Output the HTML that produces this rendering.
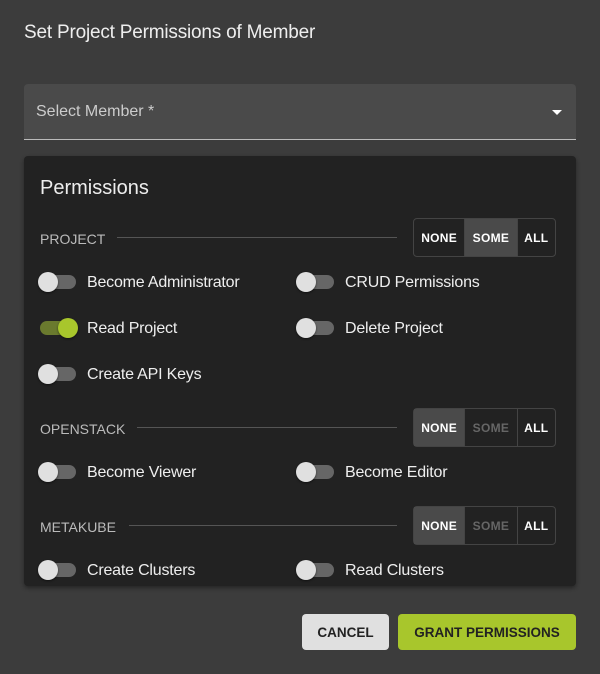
<!DOCTYPE html><html><head><style>
body{margin:0;width:600px;height:674px;background:#3c3c3c;font-family:"Liberation Sans",sans-serif;color:#fff;position:relative;overflow:hidden}
.a{position:absolute}
.title{left:24px;top:22px;font-size:19px;color:#eee;letter-spacing:-.2px}
.sel{left:24px;top:84px;width:552px;height:55px;background:#4a4a4a;border-bottom:1px solid #bbb;border-radius:4px 4px 0 0}
.sel span{position:absolute;left:12px;top:19px;font-size:16px;color:#ccc}
.sel i{position:absolute;right:14px;top:26px;border:5px solid transparent;border-top-color:#fff;border-bottom:0}
.card{left:24px;top:156px;width:552px;height:430px;background:#222;border-radius:4px;box-shadow:0 2px 4px rgba(0,0,0,.4)}
.h{font-size:14px;color:#bbb}
.line{height:1px;background:#555}
.grp{display:flex;border:1px solid #444;border-radius:4px;height:37px;font-size:12px;font-weight:bold;letter-spacing:.3px}
.grp div{display:flex;align-items:center;justify-content:center;border-right:1px solid #444}
.grp div:last-child{border-right:0}
.on{background:#4a4a4a}
.dim{color:#666}
.t{width:36px;height:14px;border-radius:7px;background:#666}
.t b{position:absolute;left:-2px;top:-3px;width:20px;height:20px;border-radius:50%;background:#e0e0e0;box-shadow:0 1px 2px rgba(0,0,0,.5)}
.t.g{background:#6a7a2e}.t.g b{left:18px;background:#a8c62c}
.l{font-size:16px;color:#eee;letter-spacing:-.2px}
.btn{top:614px;height:36px;border-radius:4px;font-size:13.5px;font-weight:bold;color:#222;display:flex;align-items:center;justify-content:center}
</style></head><body>
<div class="a title">Set Project Permissions of Member</div>
<div class="a sel"><span>Select Member *</span><i></i></div>
<div class="a card"></div>
<div class="a" style="left:40px;top:177px;font-size:20px;color:#eee">Permissions</div>

<div class="a h" style="left:40px;top:231px">PROJECT</div>
<div class="a line" style="left:117px;top:237px;width:280px"></div>
<div class="a grp" style="left:413px;top:218px;width:141px"><div style="width:51px">NONE</div><div class="on" style="width:52px">SOME</div><div style="width:38px">ALL</div></div>

<div class="a t" style="left:40px;top:275px"><b></b></div><div class="a l" style="left:87px;top:274px">Become Administrator</div>
<div class="a t" style="left:298px;top:275px"><b></b></div><div class="a l" style="left:345px;top:274px">CRUD Permissions</div>
<div class="a t g" style="left:40px;top:321px"><b></b></div><div class="a l" style="left:87px;top:320px">Read Project</div>
<div class="a t" style="left:298px;top:321px"><b></b></div><div class="a l" style="left:345px;top:320px">Delete Project</div>
<div class="a t" style="left:40px;top:367px"><b></b></div><div class="a l" style="left:87px;top:366px">Create API Keys</div>

<div class="a h" style="left:40px;top:421px">OPENSTACK</div>
<div class="a line" style="left:137px;top:427px;width:260px"></div>
<div class="a grp" style="left:413px;top:408px;width:141px"><div class="on" style="width:51px">NONE</div><div class="dim" style="width:52px">SOME</div><div style="width:38px">ALL</div></div>
<div class="a t" style="left:40px;top:465px"><b></b></div><div class="a l" style="left:87px;top:464px">Become Viewer</div>
<div class="a t" style="left:298px;top:465px"><b></b></div><div class="a l" style="left:345px;top:464px">Become Editor</div>

<div class="a h" style="left:40px;top:519px">METAKUBE</div>
<div class="a line" style="left:129px;top:525px;width:268px"></div>
<div class="a grp" style="left:413px;top:506px;width:141px"><div class="on" style="width:51px">NONE</div><div class="dim" style="width:52px">SOME</div><div style="width:38px">ALL</div></div>
<div class="a t" style="left:40px;top:563px"><b></b></div><div class="a l" style="left:87px;top:562px">Create Clusters</div>
<div class="a t" style="left:298px;top:563px"><b></b></div><div class="a l" style="left:345px;top:562px">Read Clusters</div>

<div class="a btn" style="left:302px;width:87px;background:#e0e0e0">CANCEL</div>
<div class="a btn" style="left:398px;width:178px;background:#a8c62c">GRANT PERMISSIONS</div>
</body></html>
